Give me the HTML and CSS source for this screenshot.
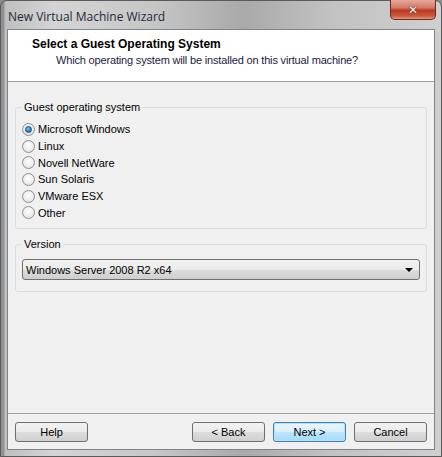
FILE: index.html
```html
<!DOCTYPE html>
<html>
<head>
<meta charset="utf-8">
<link rel="stylesheet" href="styles.css">
</head>
<body>
<div class="window">
  <div class="titlebar">
    <span class="title">New Virtual Machine Wizard</span>
    <div class="close"><span class="x">✕</span></div>
  </div>
  <div class="client">
    <div class="header">
      <div class="h-title">Select a Guest Operating System</div>
      <div class="h-sub">Which operating system will be installed on this virtual machine?</div>
    </div>
    <div class="body">
      <fieldset class="group group-os">
        <legend>Guest operating system</legend>
        <div class="radios">
          <div class="radio checked"><span class="dot"></span><span>Microsoft Windows</span></div>
          <div class="radio"><span class="dot"></span><span>Linux</span></div>
          <div class="radio"><span class="dot"></span><span>Novell NetWare</span></div>
          <div class="radio"><span class="dot"></span><span>Sun Solaris</span></div>
          <div class="radio"><span class="dot"></span><span>VMware ESX</span></div>
          <div class="radio"><span class="dot"></span><span>Other</span></div>
        </div>
      </fieldset>
      <fieldset class="group group-ver">
        <legend>Version</legend>
        <div class="select"><span>Windows Server 2008 R2 x64</span><span class="arrow"></span></div>
      </fieldset>
    </div>
    <div class="footer">
      <div class="btn">Help</div>
      <div class="spacer"></div>
      <div class="btn">&lt; Back</div>
      <div class="btn default">Next &gt;</div>
      <div class="btn">Cancel</div>
    </div>
  </div>
</div>
</body>
</html>
```

FILE: styles.css
```css
* { box-sizing: border-box; }
html, body { margin: 0; padding: 0; }
body {
  width: 442px;
  height: 457px;
  overflow: hidden;
  font-family: "Liberation Sans", Arial, sans-serif;
  background: #8a8a8a;
}
.window {
  width: 442px;
  height: 457px;
  display: flex;
  flex-direction: column;
  border: 1px solid #5a5a5a;
  border-radius: 7px 7px 0 0;
  background:
    linear-gradient(90deg, rgba(60,60,60,0.35) 0, rgba(60,60,60,0.35) 3px, transparent 4px),
    linear-gradient(90deg, #bdbdbd 0%, #d4d4d4 12%, #c6c6c6 35%, #a9a9a9 55%, #c2c2c2 75%, #cfcfcf 100%);
  padding: 0 6px 6px 6px;
}
.titlebar {
  height: 28px;
  display: flex;
  align-items: center;
  position: relative;
  flex: none;
}
.title {
  font-family: "Open Sans", "Liberation Sans", sans-serif;
  font-size: 12px;
  color: #1d2a3a;
  margin-left: 1px;
  margin-top: 2px;
}
.close {
  position: absolute;
  right: -1px;
  top: -1px;
  width: 46px;
  height: 20px;
  border: 1px solid #6b2a22;
  border-top: none;
  border-radius: 0 0 5px 5px;
  background: linear-gradient(180deg, #e6a89a 0%, #d37a68 40%, #c0391f 55%, #cc5a40 85%, #e49a83 100%);
  display: flex;
  align-items: center;
  justify-content: center;
}
.x {
  color: #fff;
  font-family: "DejaVu Sans", sans-serif;
  font-weight: bold;
  font-size: 12px;
  text-shadow: 0 0 1px #3a1a14, 0 0 1px #3a1a14;
}
.client {
  flex: 1;
  display: flex;
  flex-direction: column;
  border: 1px solid #7a8590;
  background: #f0f0f0;
  font-size: 11px;
  color: #000;
}
.header {
  height: 52px;
  background: #fff;
  border-bottom: 1px solid #a0a0a0;
  padding: 7px 0 0 24px;
  flex: none;
}
.h-title {
  font-weight: bold;
  font-size: 12px;
  color: #000;
}
.h-sub {
  margin-top: 3px;
  padding-left: 24px;
  color: #1a1a40;
  letter-spacing: -0.17px;
}
.body {
  flex: 1;
  padding: 19px 7px 0 7px;
  display: flex;
  flex-direction: column;
  gap: 9px;
}
.group {
  margin: 0;
  border: 1px solid #d5dfe5;
  border-radius: 3px;
  padding: 0 6px 0 6px;
  min-width: 0;
}
.group legend {
  padding: 0 2px;
  margin-left: 0;
  color: #000;
}
.group-os { height: 128px; }
.group-ver { height: 54px; }
.radios {
  display: flex;
  flex-direction: column;
  padding-top: 8px;
}
.radio {
  display: flex;
  align-items: center;
  height: 16.7px;
  gap: 3px;
}
.dot {
  width: 13px;
  height: 13px;
  border-radius: 50%;
  border: 1px solid #8e8f8f;
  background: radial-gradient(circle at 50% 40%, #fff 0%, #f0f0f0 45%, #d8d8d8 100%);
  display: flex;
  align-items: center;
  justify-content: center;
  flex: none;
}
.radio.checked .dot::after {
  content: "";
  width: 7px;
  height: 7px;
  border-radius: 50%;
  background: radial-gradient(circle at 40% 35%, #8fd3ff 0%, #2f8fd8 45%, #0a4c8c 100%);
  border: 1px solid #1e4f7a;
  box-sizing: border-box;
}
.select {
  margin-top: 9px;
  height: 21px;
  border: 1px solid #707070;
  border-radius: 3px;
  background: linear-gradient(180deg, #f2f2f2 0%, #ebebeb 50%, #dddddd 51%, #cfcfcf 100%);
  display: flex;
  align-items: center;
  justify-content: space-between;
  padding: 0 6px 0 3px;
}
.arrow {
  width: 0;
  height: 0;
  border-left: 4px solid transparent;
  border-right: 4px solid transparent;
  border-top: 4px solid #000;
}
.footer {
  flex: none;
  height: 36px;
  border-top: 1px solid #a0a0a0;
  display: flex;
  align-items: flex-start;
  gap: 8px;
  padding: 8px 7px 0 7px;
}
.spacer { flex: 1; }
.btn {
  width: 73px;
  height: 20px;
  border: 1px solid #707070;
  border-radius: 3px;
  background: linear-gradient(180deg, #f2f2f2 0%, #ebebeb 50%, #dddddd 51%, #cfcfcf 100%);
  display: flex;
  align-items: center;
  justify-content: center;
  color: #000;
}
.btn.default {
  border-color: #3c7fb1;
  background: linear-gradient(180deg, #eaf6fd 0%, #d9f0fc 50%, #bee6fd 51%, #a7d9f5 100%);
  box-shadow: inset 0 0 0 1px #b6e3fb;
}
```
